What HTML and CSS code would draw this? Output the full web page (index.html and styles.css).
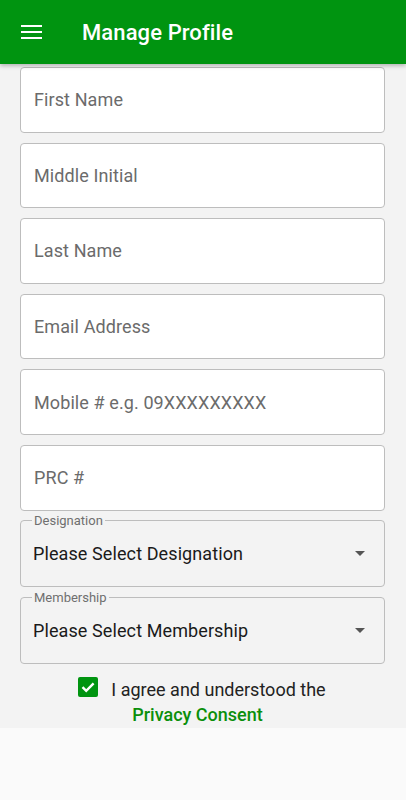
FILE: index.html
```html
<!DOCTYPE html>
<html>
<head>
  <title>Manage Profile</title>
  <link rel="stylesheet" href="styles.css">
</head>
<body>

<header class="app-bar">
  <svg class="menu-icon" width="21" height="14" viewBox="0 0 21 14">
    <rect x="0" y="0" width="21" height="2" fill="#fff"/>
    <rect x="0" y="6" width="21" height="2" fill="#fff"/>
    <rect x="0" y="12" width="21" height="2" fill="#fff"/>
  </svg>
  <h1 class="app-title">Manage Profile</h1>
</header>

<main class="profile-form">
  <input class="text-field" type="text" placeholder="First Name">
  <input class="text-field" type="text" placeholder="Middle Initial">
  <input class="text-field" type="text" placeholder="Last Name">
  <input class="text-field" type="text" placeholder="Email Address">
  <input class="text-field" type="text" placeholder="Mobile # e.g. 09XXXXXXXXX">
  <input class="text-field" type="text" placeholder="PRC #">

  <fieldset class="select-field">
    <legend>Designation</legend>
    <div class="select-row">
      <span>Please Select Designation</span>
      <span class="caret"></span>
    </div>
  </fieldset>

  <fieldset class="select-field">
    <legend>Membership</legend>
    <div class="select-row">
      <span>Please Select Membership</span>
      <span class="caret"></span>
    </div>
  </fieldset>

  <div class="consent">
    <div class="consent-row">
      <span class="checkbox">
        <svg width="20" height="20" viewBox="0 0 20 20">
          <path d="M4.5 10.2 L8.2 13.8 L15.6 6.4" fill="none" stroke="#fff" stroke-width="2.4"/>
        </svg>
      </span>
      <span>I agree and understood the</span>
    </div>
    <a class="consent-link" href="#">Privacy Consent</a>
  </div>
</main>

</body>
</html>
```

FILE: styles.css
```css
body {
  margin: 0;
  background-color: #fafafa;
  font-family: Roboto, "Noto Sans", sans-serif;
}

.app-bar {
  display: flex;
  align-items: center;
  height: 64px;
  padding-left: 21px;
  background-color: #009410;
  box-shadow: 0 2px 4px rgba(0,0,0,0.25);
  position: relative;
}

.menu-icon {
  display: block;
}

.app-title {
  margin: 0 0 0 40px;
  padding-top: 1px;
  font-size: 22px;
  font-weight: 500;
  letter-spacing: 0.1px;
  color: white;
}

.profile-form {
  display: flex;
  flex-direction: column;
  background-color: #f3f3f3;
  padding: 3px 21px 1px 20px;
}

.text-field {
  box-sizing: border-box;
  height: 65.6px;
  margin: 0 0 10px 0;
  padding: 0 13px;
  border: 1px solid #bdbdbd;
  border-radius: 4px;
  background-color: white;
  font-family: Roboto, sans-serif;
  font-size: 18px;
  letter-spacing: 0.1px;
  color: #222;
  outline: none;
}

.text-field::placeholder {
  color: #6b6b6b;
}

.select-field {
  margin: -8px 0 11px 0;
  padding: 0 11px 8px 12px;
  border: 1px solid #bdbdbd;
  border-radius: 4px;
  background-color: transparent;
}

.select-field legend {
  margin-left: -1px;
  padding: 0 2px;
  font-size: 13px;
  line-height: 16px;
  color: #6f6f6f;
}

.select-row {
  display: flex;
  align-items: center;
  justify-content: space-between;
  height: 49px;
  font-size: 18px;
  letter-spacing: 0.1px;
  color: #1a1a1a;
}

.caret {
  width: 0;
  height: 0;
  margin-right: 8px;
  border-left: 5px solid transparent;
  border-right: 5px solid transparent;
  border-top: 5px solid #555;
}

.consent {
  margin-top: 2px;
  font-size: 18px;
  line-height: 25px;
  color: #222;
  text-align: center;
}

.consent-row {
  display: flex;
  justify-content: center;
  align-items: flex-start;
  gap: 13px;
  padding-right: 1px;
}

.checkbox {
  display: block;
  width: 20px;
  height: 20px;
  margin-top: 0.3px;
  border-radius: 2px;
  background-color: #009410;
}

.checkbox svg {
  display: block;
}

.consent-link {
  display: block;
  padding-right: 10px;
  font-weight: 500;
  color: #0a8f0a;
  text-decoration: none;
}
```
